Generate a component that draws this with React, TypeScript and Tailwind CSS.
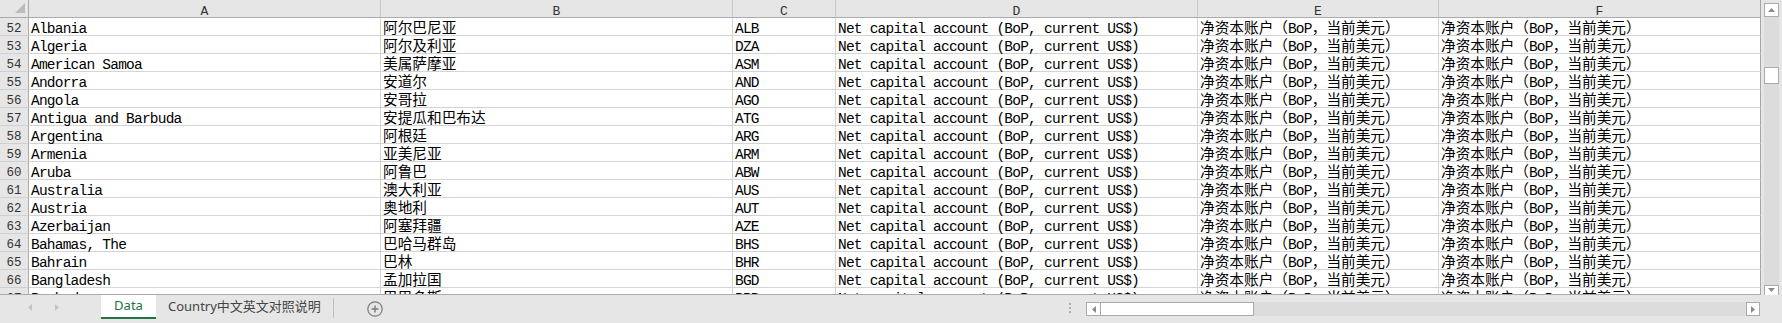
import React from 'react';

const rows: [number, string, string, string][] = [
  [52, 'Albania', '阿尔巴尼亚', 'ALB'],
  [53, 'Algeria', '阿尔及利亚', 'DZA'],
  [54, 'American Samoa', '美属萨摩亚', 'ASM'],
  [55, 'Andorra', '安道尔', 'AND'],
  [56, 'Angola', '安哥拉', 'AGO'],
  [57, 'Antigua and Barbuda', '安提瓜和巴布达', 'ATG'],
  [58, 'Argentina', '阿根廷', 'ARG'],
  [59, 'Armenia', '亚美尼亚', 'ARM'],
  [60, 'Aruba', '阿鲁巴', 'ABW'],
  [61, 'Australia', '澳大利亚', 'AUS'],
  [62, 'Austria', '奥地利', 'AUT'],
  [63, 'Azerbaijan', '阿塞拜疆', 'AZE'],
  [64, 'Bahamas, The', '巴哈马群岛', 'BHS'],
  [65, 'Bahrain', '巴林', 'BHR'],
  [66, 'Bangladesh', '孟加拉国', 'BGD'],
  [67, 'Barbados', '巴巴多斯', 'BRB'],
];

const IND_EN = 'Net capital account (BoP, current US$)';
const IND_ZH = '净资本账户（BoP，当前美元）';
const COLS = ['A', 'B', 'C', 'D', 'E', 'F'];

// ascii runs stay in the mono font, everything else goes to the CJK font
const Mixed = ({ text }: { text: string }) => (
  <>
    {text
      .split(/([\x00-\x7F]+)/)
      .filter(Boolean)
      .map((part, i) =>
        /^[\x00-\x7F]+$/.test(part) ? (
          <span key={i}>{part}</span>
        ) : (
          <span key={i} className="font-['Noto_Sans_CJK_SC',sans-serif] text-[14.67px] leading-[8px] tracking-normal">
            {part}
          </span>
        )
      )}
  </>
);

const Cell = ({ text, last }: { text: string; last?: boolean }) => (
  <div
    className={`h-[18px] pl-[2px] pt-[4px] leading-[15px] whitespace-nowrap border-b border-r border-b-[#d4d4d4] ${
      last ? 'border-r-[#a6a6a6]' : 'border-r-[#d4d4d4]'
    }`}
  >
    <Mixed text={text} />
  </div>
);

const Arrow = ({ dir, color = '#8a8a8a' }: { dir: 'up' | 'down' | 'left' | 'right'; color?: string }) => {
  const pts = {
    up: '0,4 3.5,0 7,4',
    down: '0,0 7,0 3.5,4',
    left: '4,0 4,7 0,3.5',
    right: '0,0 0,7 4,3.5',
  }[dir];
  const vertical = dir === 'up' || dir === 'down';
  return (
    <svg width={vertical ? 7 : 4} height={vertical ? 4 : 7} viewBox={vertical ? '0 0 7 4' : '0 0 4 7'}>
      <polygon points={pts} fill={color} />
    </svg>
  );
};

export default function App() {
  return (
    <div className="w-[1782px] h-[323px] bg-[#e6e6e6] overflow-hidden flex flex-col">
      <div className="flex h-[295px]">
        <div className="w-[1761px] h-[295px] bg-white border-b border-[#ababab] overflow-hidden">
          <div className="grid grid-cols-[29px_352px_352px_103px_362px_241px_322px] font-['Liberation_Mono',monospace] text-[14.5px] tracking-[-0.78px] text-black">
            {/* column headers */}
            <div className="h-[18px] bg-[#e6e6e6] border-r border-b border-[#ababab] flex justify-end pr-[3px] pt-[3px]">
              <svg width="10" height="10" viewBox="0 0 10 10">
                <polygon points="10,0 10,10 0,10" fill="#bcbcbc" />
              </svg>
            </div>
            {COLS.map((c, i) => (
              <div
                key={c}
                className={`h-[18px] bg-[#e6e6e6] border-b border-b-[#ababab] border-r text-center text-[13px] leading-[13px] pt-[5px] tracking-normal text-[#333] ${
                  i === COLS.length - 1 ? 'border-r-[#a6a6a6]' : 'border-r-[#c8c8c8]'
                }`}
              >
                {c}
              </div>
            ))}

            {rows.map(([n, en, zh, code]) => (
              <React.Fragment key={n}>
                <div className="h-[18px] bg-[#e6e6e6] border-r border-r-[#ababab] border-b border-b-[#d0d0d0] text-center text-[12.5px] leading-[12px] pt-[5px] tracking-normal text-[#333]">
                  {n}
                </div>
                <Cell text={en} />
                <Cell text={zh} />
                <Cell text={code} />
                <Cell text={IND_EN} />
                <Cell text={IND_ZH} />
                <Cell text={IND_ZH} last />
              </React.Fragment>
            ))}
          </div>
        </div>

        {/* vertical scrollbar */}
        <div className="w-[21px] h-[295px] px-[3px] pt-[3px] overflow-hidden">
          <div className="h-full bg-[#dcdcdc] flex flex-col">
            <div className="h-[14px] bg-white border border-[#ababab] flex items-center justify-center">
              <Arrow dir="up" />
            </div>
            <div className="h-[50px]" />
            <div className="h-[17px] bg-white border border-[#ababab]" />
            <div className="flex-1" />
            <div className="h-[10px] bg-white border-x border-t border-[#ababab] flex justify-center pt-[2px]">
              <Arrow dir="down" />
            </div>
          </div>
        </div>
      </div>

      {/* sheet tabs */}
      <div className="h-[28px] flex items-start font-['Noto_Sans','Noto_Sans_CJK_SC',sans-serif] text-[13px]">
        <div className="w-[101px] h-[24px] flex items-center pl-[28px] gap-[23px]">
          <Arrow dir="left" color="#c4c4c4" />
          <Arrow dir="right" color="#c4c4c4" />
        </div>
        <div className="w-[55px] h-[24px] bg-white border-b-2 border-[#217346] text-[#217346] flex items-center justify-center">
          Data
        </div>
        <div className="h-[24px] px-[12px] flex items-center text-[#444] whitespace-nowrap">Country中文英文对照说明</div>
        <div className="w-px h-[20px] mt-[3px] bg-[#c0c0c0]" />
        <div className="ml-[33px] mt-[6px]">
          <svg width="16" height="16" viewBox="0 0 16 16">
            <circle cx="8" cy="8" r="7.2" fill="none" stroke="#7a7a7a" strokeWidth="1.2" />
            <path d="M8 4.5v7M4.5 8h7" stroke="#7a7a7a" strokeWidth="1.4" />
          </svg>
        </div>

        <div className="ml-auto w-[24px] h-[28px] pl-[7px] pt-[8px] flex flex-col gap-[2px]">
          <div className="w-[2px] h-[2px] bg-[#b0b0b0]" />
          <div className="w-[2px] h-[2px] bg-[#b0b0b0]" />
          <div className="w-[2px] h-[2px] bg-[#b0b0b0]" />
        </div>
        <div className="w-[674px] h-[14px] mt-[7px] bg-[#dcdcdc] flex">
          <div className="w-[15px] h-full bg-white border border-[#ababab] flex items-center justify-center">
            <Arrow dir="left" />
          </div>
          <div className="w-[153px] h-full bg-white border-y border-r border-[#ababab]" />
          <div className="flex-1" />
          <div className="w-[14px] h-full bg-white border border-[#ababab] flex items-center justify-center">
            <Arrow dir="right" />
          </div>
        </div>
        <div className="w-[22px]" />
      </div>
    </div>
  );
}
